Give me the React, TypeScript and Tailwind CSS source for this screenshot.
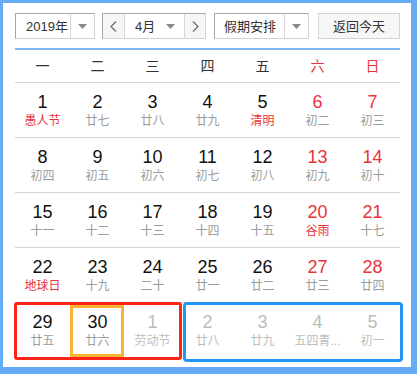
import { ReactNode } from "react";

type Day = {
  n: number;
  l: string;
  red?: boolean; // red lunar / holiday text
  wk?: boolean; // weekend number
  off?: boolean; // not this month
};

const weeks: Day[][] = [
  [
    { n: 1, l: "愚人节", red: true },
    { n: 2, l: "廿七" },
    { n: 3, l: "廿八" },
    { n: 4, l: "廿九" },
    { n: 5, l: "清明", red: true },
    { n: 6, l: "初二", wk: true },
    { n: 7, l: "初三", wk: true },
  ],
  [
    { n: 8, l: "初四" },
    { n: 9, l: "初五" },
    { n: 10, l: "初六" },
    { n: 11, l: "初七" },
    { n: 12, l: "初八" },
    { n: 13, l: "初九", wk: true },
    { n: 14, l: "初十", wk: true },
  ],
  [
    { n: 15, l: "十一" },
    { n: 16, l: "十二" },
    { n: 17, l: "十三" },
    { n: 18, l: "十四" },
    { n: 19, l: "十五" },
    { n: 20, l: "谷雨", wk: true, red: true },
    { n: 21, l: "十七", wk: true },
  ],
  [
    { n: 22, l: "地球日", red: true },
    { n: 23, l: "十九" },
    { n: 24, l: "二十" },
    { n: 25, l: "廿一" },
    { n: 26, l: "廿二" },
    { n: 27, l: "廿三", wk: true },
    { n: 28, l: "廿四", wk: true },
  ],
  [
    { n: 29, l: "廿五" },
    { n: 30, l: "廿六" },
    { n: 1, l: "劳动节", off: true },
    { n: 2, l: "廿八", off: true },
    { n: 3, l: "廿九", off: true },
    { n: 4, l: "五四青...", off: true },
    { n: 5, l: "初一", off: true },
  ],
];

const weekdays = ["一", "二", "三", "四", "五", "六", "日"];

function Caret() {
  return (
    <svg width="9" height="5" viewBox="0 0 9 5">
      <path d="M0 0h9L4.5 5z" fill="#8a8a8a" />
    </svg>
  );
}

function Chevron({ dir }: { dir: "l" | "r" }) {
  return (
    <svg width="7" height="11" viewBox="0 0 7 11">
      <path
        d={dir === "l" ? "M6 0.5L1 5.5l5 5" : "M1 0.5l5 5-5 5"}
        fill="none"
        stroke="#6b6b6b"
        strokeWidth="1.2"
      />
    </svg>
  );
}

function Select({ w, children }: { w: string; children: ReactNode }) {
  return (
    <div
      className={`${w} flex h-[26px] border border-[#d2d2d2] border-t-[#a6a6a6] border-l-[#a6a6a6] bg-white`}
    >
      {children}
    </div>
  );
}

function Cell({ d }: { d: Day }) {
  const num = d.off ? "text-[#bdbdbd]" : d.wk ? "text-[#e8333c]" : "text-[#111]";
  const lunar = d.off ? "text-[#bdbdbd]" : d.red ? "text-[#e8333c]" : "text-[#9b9b9b]";
  return (
    <div className="flex flex-col items-center pt-[9px] min-w-0">
      <span className={`text-[18px] leading-[20px] ${num}`}>{d.n}</span>
      <span className={`mt-[1px] whitespace-nowrap text-[12px] leading-[16px] ${lunar}`}>
        {d.l}
      </span>
    </div>
  );
}

export default function App() {
  return (
    <div className="w-[417px] h-[374px] bg-[#64acf6] pl-[3px] pt-[3px] pr-[6px] pb-[7px] font-['Liberation_Sans','Noto_Sans_CJK_SC',sans-serif]">
      <div className="h-full bg-white pl-3 pr-[11px] pt-[10px]">
        {/* toolbar */}
        <div className="flex items-center text-[13px] text-[#333]">
          <Select w="w-[80px]">
            <div className="flex-1 flex items-center pl-[10px] leading-none">2019年</div>
            <div className="w-[24px] flex items-center justify-center border-l border-[#d8d8d8]">
              <Caret />
            </div>
          </Select>
          <div className="ml-[7px]">
            <Select w="w-[104px]">
              <div className="w-[22px] flex items-center justify-center bg-[#f6f6f6] border-r border-[#d8d8d8]">
                <Chevron dir="l" />
              </div>
              <div className="flex-1 flex items-center justify-between pl-[10px] pr-[9px] leading-none">
                <span>4月</span>
                <Caret />
              </div>
              <div className="w-[21px] flex items-center justify-center bg-[#f6f6f6] border-l border-[#d8d8d8]">
                <Chevron dir="r" />
              </div>
            </Select>
          </div>
          <div className="ml-[8px]">
            <Select w="w-[95px]">
              <div className="flex-1 flex items-center pl-[9px] leading-none">假期安排</div>
              <div className="w-[24px] flex items-center justify-center border-l border-[#d8d8d8]">
                <Caret />
              </div>
            </Select>
          </div>
          <button className="ml-[9px] w-[82px] h-[26px] border border-[#d4d4d4] bg-[#f7f7f7] text-[13px] text-[#333] leading-none">
            返回今天
          </button>
        </div>

        <div className="mt-[9px] h-[2px] bg-[#7db8f1]" />

        {/* weekday header */}
        <div className="grid grid-cols-7 h-[33px] border-b border-[#d4d4d4] text-[14px]">
          {weekdays.map((w, i) => (
            <div
              key={w}
              className={`flex items-center justify-center ${i > 4 ? "text-[#e8333c]" : "text-[#333]"}`}
            >
              {w}
            </div>
          ))}
        </div>

        {/* days */}
        {weeks.map((row, ri) => {
          const last = ri === weeks.length - 1;
          return (
            <div
              key={ri}
              className={`relative grid grid-cols-7 h-[55px] ${last ? "" : "border-b border-[#d4d4d4]"}`}
            >
              {row.map((d, ci) => (
                <Cell key={ci} d={d} />
              ))}
              {last && (
                <>
                  <div className="absolute left-[-1px] top-[-1px] w-[168px] h-[58px] border-[3px] border-[#ff2418] rounded-[3px]" />
                  <div className="absolute left-[55px] top-[2px] w-[54px] h-[52px] border-[3px] border-[#f9b531]" />
                  <div className="absolute left-[168px] top-[-1px] w-[220px] h-[60px] border-[3px] border-[#2196f7] rounded-[4px]" />
                </>
              )}
            </div>
          );
        })}
      </div>
    </div>
  );
}
